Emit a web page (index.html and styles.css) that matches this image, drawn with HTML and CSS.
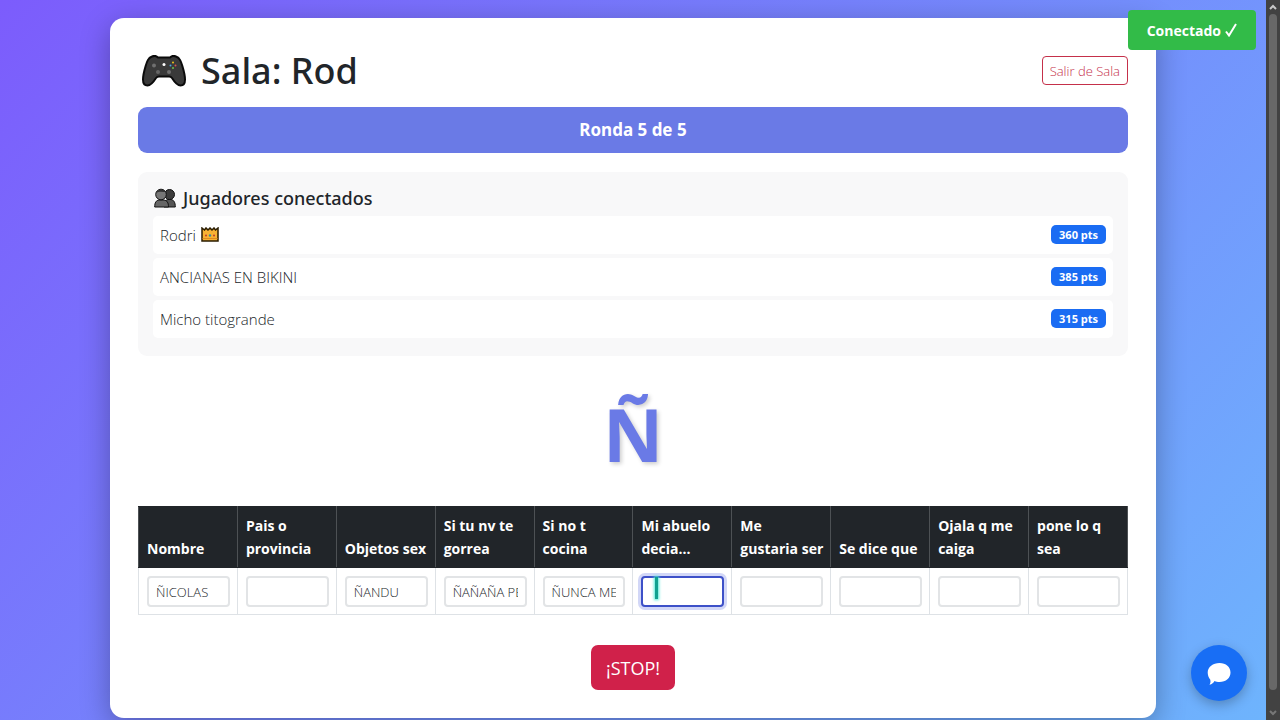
FILE: index.html
```html
<!DOCTYPE html>
<html lang="es">

<head>
  <meta charset="UTF-8">
  <meta name="viewport" content="width=device-width, initial-scale=1.0">
  <title>Sala: Rod</title>
  <link rel="stylesheet" href="styles.css">
</head>

<body>
  <main class="page">
    <div class="card">
      <header class="header">
        <h1 class="title">
          <svg class="icon-pad" viewBox="0 0 44 32" aria-hidden="true">
            <path d="M10 1.500C12 .5 14.500 1 16 2.500h12C29.500 1 32 .5 34 1.500c4 1.500 5 5 6.500 10 1.500 5 2.500 9.500 2.500 13 0 4-1.500 6-4.500 6-3.500 0-6-3.500-8.500-7.500-.8-1-1.500-1.500-3-1.500H17c-1.500 0-2.200.5-3 1.500-2.500 4-5 7.500-8.500 7.500-3 0-4.500-2-4.500-6 0-3.500 1-8 2.500-13C5 6.500 6 3 10 1.500z" fill="#3a3a3a" stroke="#0b0b0b" stroke-width="2"/>
            <circle cx="12" cy="10.500" r="2" fill="#707070"/>
            <circle cx="16" cy="17" r="2" fill="#666"/>
            <circle cx="27" cy="17" r="2" fill="#707070"/>
            <circle cx="22" cy="9.500" r="1.500" fill="#fff"/>
            <circle cx="31" cy="7.500" r="1" fill="#f0c419"/>
            <circle cx="28.500" cy="10.500" r="1" fill="#4aa3df"/>
            <circle cx="33.500" cy="10.500" r="1" fill="#d9534f"/>
            <circle cx="31" cy="13" r="1" fill="#6fbf4b"/>
          </svg>
          Sala: Rod
        </h1>
        <button class="btn btn-exit" type="button">Salir de Sala</button>
      </header>

      <div class="round">Ronda 5 de 5</div>

      <section class="players">
        <h2 class="players-title">
          <svg class="icon-users" viewBox="0 0 22 20" aria-hidden="true">
            <path d="M10 19c0-5 1.500-7 4-7.500h3c3 .5 4.300 3 4.300 7.500z" fill="#555" stroke="#111"/>
            <circle cx="15.500" cy="6.500" r="5" fill="#3c3c3c" stroke="#111"/>
            <path d="M.7 19c0-4.500 1.300-6.500 4.300-7h5c3 .5 4.500 2.500 4.500 7z" fill="#666" stroke="#111"/>
            <circle cx="7" cy="6.500" r="5.300" fill="#777" stroke="#111"/>
            <path d="M2 5c1-4 8-5 10-1-3 0-7-1-10 1z" fill="#333"/>
          </svg>
          Jugadores conectados
        </h2>
        <ul class="list">
          <li class="item">
            <span class="name">Rodri
              <svg class="icon-crown" viewBox="0 0 18 15" aria-hidden="true">
                <path d="M1 1l2.500 2L5 1l2 2 2-2 2 2 2-2 1.500 2L17 1v13H1z" fill="#f7b233" stroke="#2a1c00" stroke-width="1.500"/>
                <path d="M1.500 11.500h15" stroke="#dd8b1e"/>
                <circle cx="5" cy="8.500" r="1" fill="#c0392b"/>
                <circle cx="9" cy="8.500" r="1.200" fill="#378d9c"/>
                <circle cx="13" cy="8.500" r="1" fill="#c0392b"/>
              </svg>
            </span>
            <span class="badge">360 pts</span>
          </li>
          <li class="item">
            <span class="name">ANCIANAS EN BIKINI</span>
            <span class="badge">385 pts</span>
          </li>
          <li class="item">
            <span class="name">Micho titogrande</span>
            <span class="badge">315 pts</span>
          </li>
        </ul>
      </section>

      <div class="letter">Ñ</div>

      <table class="answers">
        <thead>
          <tr>
            <th id="c1">Nombre</th>
            <th id="c2">Pais o provincia</th>
            <th id="c3">Objetos sex</th>
            <th id="c4">Si tu nv te gorrea</th>
            <th id="c5">Si no t cocina</th>
            <th id="c6">Mi abuelo decia...</th>
            <th id="c7">Me gustaria&nbsp;ser</th>
            <th id="c8">Se dice que</th>
            <th id="c9">Ojala q me caiga</th>
            <th id="c10">pone lo q sea</th>
          </tr>
        </thead>
        <tbody>
          <tr>
            <td><input class="field" type="text" aria-labelledby="c1" value="ÑICOLAS"></td>
            <td><input class="field" type="text" aria-labelledby="c2"></td>
            <td><input class="field" type="text" aria-labelledby="c3" value="ÑANDU"></td>
            <td><input class="field" type="text" aria-labelledby="c4" value="ÑAÑAÑA PELADA"></td>
            <td><input class="field" type="text" aria-labelledby="c5" value="ÑUNCA ME COCINA"></td>
            <td class="current"><input class="field active" type="text" aria-labelledby="c6"><span class="caret"></span></td>
            <td><input class="field" type="text" aria-labelledby="c7"></td>
            <td><input class="field" type="text" aria-labelledby="c8"></td>
            <td><input class="field" type="text" aria-labelledby="c9"></td>
            <td><input class="field" type="text" aria-labelledby="c10"></td>
          </tr>
        </tbody>
      </table>

      <button class="btn btn-stop" type="button">¡STOP!</button>
    </div>
  </main>

  <div class="scrollbar">
    <svg class="arrow" viewBox="0 0 8 6" aria-hidden="true"><path d="M1 5l3-3 3 3" /></svg>
    <div class="thumb"></div>
    <svg class="arrow down" viewBox="0 0 8 6" aria-hidden="true"><path d="M1 1l3 3 3-3" /></svg>
  </div>

  <div class="toast">Conectado
    <svg class="icon-check" viewBox="0 0 12 14" aria-hidden="true"><path d="M1 8.500l3 4L11 1" /></svg>
  </div>

  <button class="chat" type="button" aria-label="Chat">
    <svg class="icon-chat" viewBox="0 0 24 24" aria-hidden="true">
      <path d="M12.500 2C19 2 23.500 6 23.500 11.500S19 21 12.500 21c-2 0-3.500-.3-5-1-.8 1.500-2.500 3.300-5 3.800 1-1.500 1.200-3 .8-5C1.500 16.500.7 14 .7 11.500.7 6 6 2 12.500 2z" fill="#fff"/>
    </svg>
  </button>
</body>

</html>
```

FILE: styles.css
```css
* {
  box-sizing: border-box;
  margin: 0;
  padding: 0;
}

body {
  display: flex;
  min-height: 100vh;
  font-family: "Open Sans", "Noto Sans", sans-serif;
  font-size: 15px;
  color: #212529;
}

.page {
  flex: 1;
  padding: 18px 24px 2px;
  background: linear-gradient(135deg, #7c5cfc 0%, #6eb4fd 100%);
}

.card {
  max-width: 1046px;
  margin: 0 auto;
  padding: 28px;
  border-radius: 14px;
  background-color: #fff;
  box-shadow: 0 8px 30px rgba(0, 0, 0, 0.3);
}

/* cabecera */
.header {
  display: flex;
  align-items: center;
  justify-content: space-between;
  margin-bottom: 12px;
}

.title {
  display: flex;
  align-items: center;
  gap: 15px;
  padding-left: 4px;
  font-family: "Noto Sans", "Open Sans", sans-serif;
  font-size: 36px;
  font-weight: 500;
  line-height: 49px;
}

.icon-pad {
  width: 44px;
  height: 32px;
}

.btn {
  font-family: inherit;
  cursor: pointer;
}

.btn-exit {
  height: 29px;
  padding: 0 7px;
  border: 1px solid #c5304a;
  border-radius: 4px;
  background-color: #fff;
  color: #c5304a;
  font-size: 13px;
  font-weight: 300;
}

.round {
  margin-bottom: 19px;
  border-radius: 9px;
  background-color: #6a7ae6;
  color: #fff;
  font-family: "Noto Sans", "Open Sans", sans-serif;
  font-size: 17px;
  font-weight: 700;
  line-height: 46px;
  text-align: center;
}

/* jugadores */
.players {
  padding: 14px 15px;
  border-radius: 9px;
  background-color: #f8f8f9;
}

.players-title {
  display: flex;
  align-items: center;
  gap: 7px;
  margin-bottom: 6px;
  padding-left: 1px;
  font-family: "Noto Sans", "Open Sans", sans-serif;
  font-size: 18px;
  font-weight: 500;
  line-height: 24px;
}

.icon-users {
  width: 22px;
  height: 20px;
}

.list {
  list-style: none;
}

.item {
  display: flex;
  align-items: center;
  justify-content: space-between;
  height: 38px;
  margin-bottom: 4px;
  padding: 0 7px 1px;
  border-radius: 5px;
  background-color: #fff;
}

.name {
  display: flex;
  align-items: center;
  gap: 5px;
  font-weight: 300;
}

.icon-crown {
  width: 18px;
  height: 15px;
}

.badge {
  padding: 0 8px;
  border-radius: 5px;
  background-color: #1a6cf3;
  color: #fff;
  font-size: 11px;
  font-weight: 700;
  line-height: 19px;
}

.letter {
  padding-top: 6px;
  color: #6a7ae6;
  font-size: 74px;
  font-weight: 700;
  line-height: 144px;
  text-align: center;
  text-shadow: 2px 2px 4px rgba(0, 0, 0, 0.2);
}

/* tabla de respuestas */
.answers {
  width: 100%;
  table-layout: fixed;
  border-collapse: collapse;
}

.answers th {
  padding: 7px 7px 7px 8px;
  border: 1px solid #4d5154;
  border-color: #212529 #4d5154;
  background-color: #212529;
  color: #fff;
  font-size: 14px;
  font-weight: 700;
  line-height: 23px;
  text-align: left;
  vertical-align: bottom;
}

.answers td {
  padding: 8px 7px 7px 8px;
  border: 1px solid #dee2e6;
}

.field {
  display: block;
  width: 100%;
  height: 31px;
  padding: 0 7px;
  border: 2px solid #e2e4e6;
  border-radius: 4px;
  background-color: #fff;
  color: #212529;
  font-family: inherit;
  font-size: 13px;
  font-weight: 300;
  outline: none;
}

.field.active,
.field:focus {
  border-color: #3d50c8;
  box-shadow: 0 0 0 3px rgba(106, 122, 230, 0.3);
}

.current {
  position: relative;
}

.caret {
  position: absolute;
  top: 9px;
  left: 22px;
  width: 3px;
  height: 22px;
  background-color: #10a090;
  box-shadow: 0 0 3px 1px #50e8d8;
}

.btn-stop {
  display: block;
  height: 45px;
  margin: 30px auto 0;
  padding: 0 15px;
  border: none;
  border-radius: 7px;
  background-color: #d0214a;
  color: #fff;
  font-size: 18px;
}

/* barra de desplazamiento */
.scrollbar {
  display: flex;
  flex-direction: column;
  align-items: center;
  gap: 4px;
  width: 14px;
  padding: 4px 0;
  background-color: #424242;
}

.thumb {
  width: 8px;
  height: 676px;
  border-radius: 4px;
  background-color: #686868;
}

.arrow {
  width: 8px;
  height: 6px;
  fill: none;
  stroke: #c8c8c8;
  stroke-width: 2;
}

.arrow.down {
  margin-top: auto;
  stroke: #777;
}

.toast {
  position: fixed;
  top: 10px;
  right: 24px;
  display: flex;
  align-items: center;
  gap: 4px;
  height: 40px;
  padding: 0 19px;
  border-radius: 4px;
  background-color: #32bb48;
  color: #fff;
  font-size: 14px;
  font-weight: 700;
}

.icon-check {
  width: 12px;
  height: 14px;
  fill: none;
  stroke: #fff;
  stroke-width: 2;
}

.chat {
  position: fixed;
  right: 33px;
  bottom: 19px;
  display: flex;
  align-items: center;
  justify-content: center;
  width: 56px;
  height: 56px;
  border: none;
  border-radius: 50%;
  background-color: #186ef5;
  box-shadow: 0 4px 12px rgba(0, 0, 0, 0.25);
  cursor: pointer;
}

.icon-chat {
  width: 24px;
  height: 24px;
}
```
